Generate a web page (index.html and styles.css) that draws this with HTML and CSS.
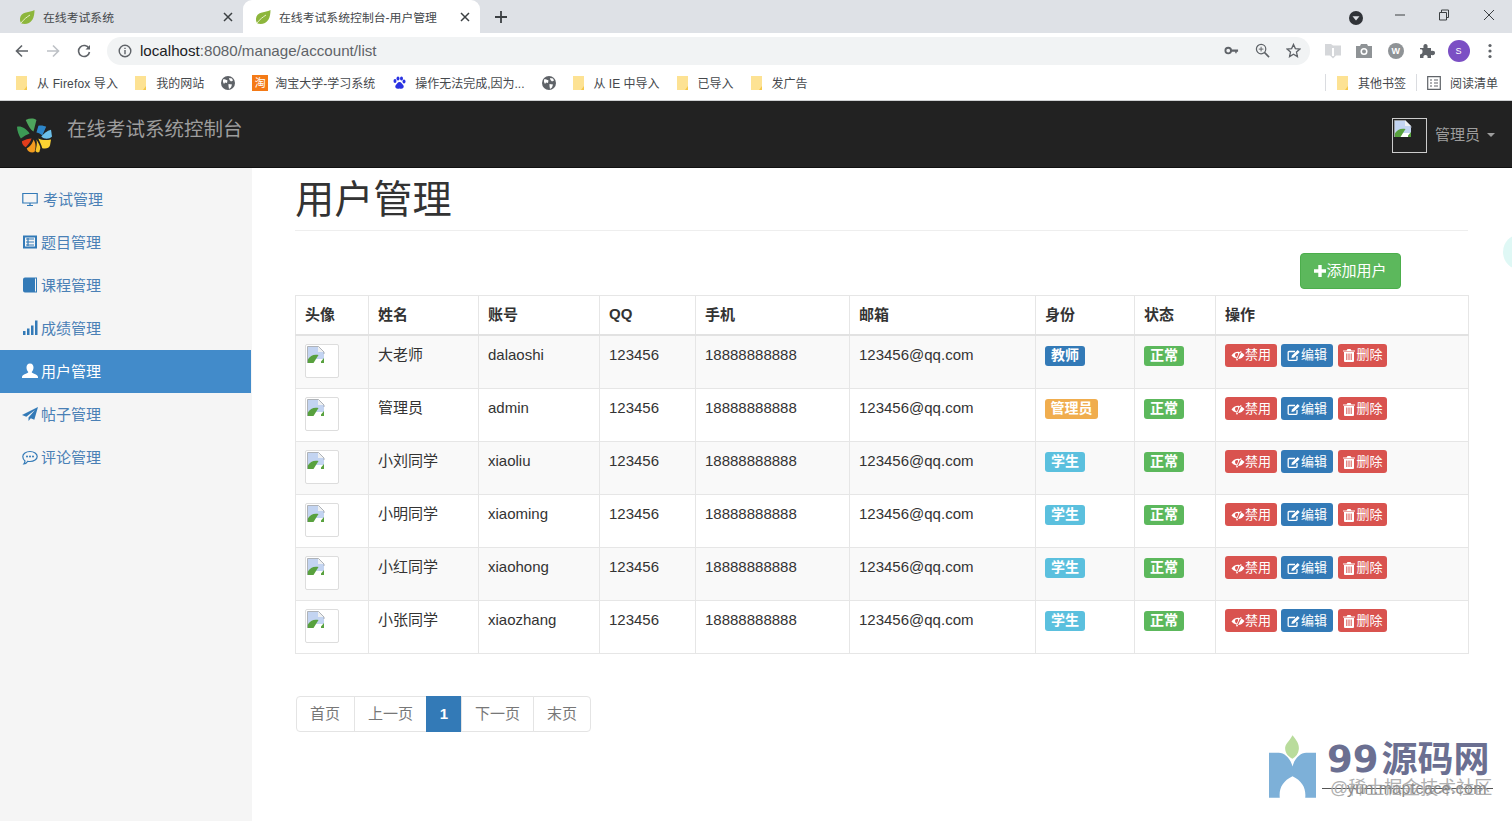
FILE: index.html
```html
<!DOCTYPE html>
<html lang="zh-CN">
<head>
<meta charset="utf-8">
<title>在线考试系统控制台-用户管理</title>
<link rel="stylesheet" href="styles.css">
</head>
<body>
<svg class="defs" width="0" height="0" aria-hidden="true">
  <symbol id="leaf" viewBox="0 0 16 16"><path d="M15.500 1C12 3.500 4 2 1.500 7.500.5 10 1 13 2.500 14.500 6 15.500 11 15 13.500 10.500 15 8 15.500 4 15.500 1z" fill="#8db63c"/><path d="M2 14C5 10 8 8 11 6" stroke="#e8f0c8" fill="none"/></symbol>
  <symbol id="close" viewBox="0 0 10 10"><path d="M1 1l8 8M9 1L1 9" stroke="#3c4043" stroke-width="1.500"/></symbol>
  <symbol id="folder" viewBox="0 0 12 14"><path d="M0 0h11v14H0z" fill="#fde293"/><path d="M11 10v4H8z" fill="#f5c84a"/></symbol>
  <symbol id="globe" viewBox="0 0 14 14"><circle cx="7" cy="7" r="7" fill="#5f6368"/><path d="M2 3.500C4 3 5 4 6.500 4.500L6 7 4 6.500 3 8 2 6zM8 2l3 .5 1 2-2 1L8.500 4zM7.500 8l3.500.5-1 3-2 1.500-.5-3z" fill="#fff"/></symbol>
  <symbol id="broken" viewBox="0 0 18 18"><path d="M.5.500h11l5.500 5.500v11H.5z" fill="#fff"/><path d="M1 1h10v5h6v7H1z" fill="#c3d4f1"/><path d="M.5 17V14C3 9.500 7 8 11.500 9L6.500 17zM14 15.500l3-3.500v5h-3z" fill="#58a13e"/><path d="M11 .500l6 5.500h-6z" fill="#eef0f2"/><path d="M.5 17V.500h11l5.500 5.500v2" fill="none" stroke="#9aa0a6" stroke-width=".8"/></symbol>
  <symbol id="eye" viewBox="0 0 14 14"><path d="M.5 7.500C3 3.500 9 2 13.500 7 12 9.500 9 11.500 6 11L9.500 3l1.200.700-4.500 9L5 12l.7-1.500C3.500 10 1.700 9 .5 7.500zM4 7a2.500 2.500 0 0 0 1.800 2.400L7 6.800C7.500 5.500 6.800 5 6 5 4.800 5 4 5.800 4 7z" fill="#fff" fill-rule="evenodd"/></symbol>
  <symbol id="edit" viewBox="0 0 14 14"><path d="M10 8v3.500a.8.800 0 0 1-.8.800H2a.8.800 0 0 1-.8-.8V4.300a.8.800 0 0 1 .8-.8h6" fill="none" stroke="#fff" stroke-width="1.300"/><path d="M5 7.500L10.700 2l2 2L7 9.500l-2.600.600z" fill="#fff"/></symbol>
  <symbol id="trash" viewBox="0 0 14 14"><path d="M2 4h10v9a1 1 0 0 1-1 1H3a1 1 0 0 1-1-1zM1 2.500h3.500L5.500 1h3l1 1.500H13v1H1z" fill="#fff"/><path d="M4.800 5.500v6.500M7 5.500v6.500M9.200 5.500v6.500" stroke="#d9534f"/></symbol>
</svg>

<div class="tabstrip">
  <div class="tab">
    <svg class="fav"><use href="#leaf"/></svg>
    <span class="tab-title">在线考试系统</span>
    <svg class="tab-close"><use href="#close"/></svg>
  </div>
  <div class="tab tab-active">
    <svg class="fav"><use href="#leaf"/></svg>
    <span class="tab-title">在线考试系统控制台-用户管理</span>
    <svg class="tab-close"><use href="#close"/></svg>
  </div>
  <svg class="newtab" viewBox="0 0 12 12"><path d="M6 0v12M0 6h12" stroke="#3c4043" stroke-width="1.800"/></svg>
  <div class="winctl">
    <svg class="win-profile" viewBox="0 0 14 14"><circle cx="7" cy="7" r="7" fill="#303338"/><path d="M3.500 5.200h7L7 9.500z" fill="#dee1e6"/></svg>
    <svg class="win-btn win-min" viewBox="0 0 12 12"><path d="M1 6h10" stroke="#3c4043" stroke-width="1"/></svg>
    <svg class="win-btn" viewBox="0 0 12 12"><path d="M1.500 3.500h7v7.500h-7zM3.500 3.500V1h7v7.500h-2" fill="none" stroke="#3c4043"/></svg>
    <svg class="win-btn" viewBox="0 0 12 12"><path d="M1 1l10 10M11 1L1 11" stroke="#3c4043"/></svg>
  </div>
</div>

<div class="toolbar">
  <svg class="nav-ic" viewBox="0 0 14 14"><path d="M13 7H2M7 1.500L1.500 7 7 12.500" fill="none" stroke="#5f6368" stroke-width="1.600"/></svg>
  <svg class="nav-ic" viewBox="0 0 14 14"><path d="M1 7h11M7 1.500L12.500 7 7 12.500" fill="none" stroke="#bdc1c6" stroke-width="1.600"/></svg>
  <svg class="nav-ic" viewBox="0 0 14 14"><path d="M12 4.500A5.500 5.500 0 1 0 12.500 8" fill="none" stroke="#5f6368" stroke-width="1.600"/><path d="M13 1v4.500H8.500z" fill="#5f6368"/></svg>
  <div class="omnibox">
    <svg class="info" viewBox="0 0 14 14"><circle cx="7" cy="7" r="5.800" fill="none" stroke="#5f6368" stroke-width="1.400"/><path d="M7 6v4.200M7 3.700v1.300" stroke="#5f6368" stroke-width="1.400"/></svg>
    <span class="url"><span class="url-host">localhost</span>:8080/manage/account/list</span>
    <div class="omni-icons">
      <svg class="omni-ic" viewBox="0 0 16 16"><circle cx="4.500" cy="8" r="3" fill="none" stroke="#5f6368" stroke-width="2"/><path d="M7 7h8v2.200h-1.500V11h-1.500V9.200H7z" fill="#5f6368"/></svg>
      <svg class="omni-ic" viewBox="0 0 16 16"><circle cx="6.500" cy="6.500" r="5" fill="none" stroke="#5f6368" stroke-width="1.300"/><path d="M10 10l5 5" stroke="#5f6368" stroke-width="1.700"/><path d="M6.500 4v5M4 6.500h5" stroke="#5f6368"/></svg>
      <svg class="omni-ic" viewBox="0 0 16 16"><path d="M8 1.500l2 4.500 4.800.5-3.600 3.200 1 4.800L8 12l-4.200 2.500 1-4.800L1.200 6.500 6 6z" fill="none" stroke="#5f6368" stroke-width="1.400"/></svg>
    </div>
  </div>
  <div class="ext-icons">
    <svg class="ext-ic" viewBox="0 0 16 16"><path d="M0 1h6l2 1.500h8v10h-5l-3 3-3-3H0z" fill="#d5d7da"/><path d="M8 5v8" stroke="#fff" stroke-width="2"/></svg>
    <svg class="ext-ic" viewBox="0 0 16 16"><path d="M0 3h4l1-2h6l1 2h4v12H0z" fill="#8f9396"/><circle cx="8" cy="8.500" r="3.500" fill="#fff"/><circle cx="8" cy="8.500" r="2" fill="#8f9396"/></svg>
    <div class="ext-w">W</div>
    <svg class="ext-ic" viewBox="0 0 16 16"><path d="M1 5h3.500C4 2 5 1 6.500 1S9 2 8.500 5H12v3c3-.5 4 .5 4 2s-1 2.500-4 2v3H8.500c.5-2-.5-3-2-3s-2.500 1-2 3H1v-3.500C3 11 3.500 10 3.500 8.500S3 6 1 6.500z" fill="#5f6368"/></svg>
    <div class="avatar">S</div>
    <svg class="ext-ic" viewBox="0 0 16 16"><circle cx="8" cy="2.500" r="1.600" fill="#5f6368"/><circle cx="8" cy="8" r="1.600" fill="#5f6368"/><circle cx="8" cy="13.500" r="1.600" fill="#5f6368"/></svg>
  </div>
</div>

<div class="bookmarks">
  <div class="bm bm-wide"><svg class="bm-ic"><use href="#folder"/></svg><span>从 Firefox 导入</span></div>
  <div class="bm"><svg class="bm-ic"><use href="#folder"/></svg><span>我的网站</span></div>
  <div class="bm"><svg class="bm-ic bm-globe"><use href="#globe"/></svg></div>
  <div class="bm bm-tb"><span class="bm-taobao">淘</span><span>淘宝大学-学习系统</span></div>
  <div class="bm"><svg class="bm-ic bm-globe" viewBox="0 0 14 14"><g fill="#2932e1"><ellipse cx="3" cy="5" rx="1.500" ry="2"/><ellipse cx="6" cy="2.500" rx="1.500" ry="2"/><ellipse cx="9.500" cy="2.500" rx="1.500" ry="2"/><ellipse cx="12" cy="5.500" rx="1.500" ry="2"/><path d="M7.500 6c2 0 2.500 2 4 3.500 1 2-1 4-4 3-3 1-5-1-4-3C5 8 5.500 6 7.500 6z"/></g></svg><span>操作无法完成,因为...</span></div>
  <div class="bm"><svg class="bm-ic bm-globe"><use href="#globe"/></svg></div>
  <div class="bm"><svg class="bm-ic"><use href="#folder"/></svg><span>从 IE 中导入</span></div>
  <div class="bm"><svg class="bm-ic"><use href="#folder"/></svg><span>已导入</span></div>
  <div class="bm"><svg class="bm-ic"><use href="#folder"/></svg><span>发广告</span></div>
  <div class="bm bm-right"><svg class="bm-ic"><use href="#folder"/></svg><span>其他书签</span></div>
  <div class="bm bm-reading"><svg class="bm-ic bm-globe" viewBox="0 0 14 14"><path d="M.7.700h12.600v12.600H.7zM3 4h2M3 7h2M3 10h2M7 4h4M7 7h4M7 10h4" fill="none" stroke="#5f6368" stroke-width="1.200"/></svg><span>阅读清单</span></div>
</div>

<header class="navbar">
  <svg class="logo" viewBox="0 0 36 36">
    <path d="M9 2c4-2 8-2 11 0-1 4-2 8-3 12-3-2-6-7-8-12z" fill="#4ea45c"/>
    <path d="M0 9c4-1 9 1 13 7-3 1-6 3-9 5-2-3-4-8-4-12z" fill="#3c9a55"/>
    <path d="M22 8c3-1 6 0 8 1l-4 9c-2-2-5-3-6-3z" fill="#2d86c9"/>
    <path d="M25 19c2-3 6-6 10-7l1 7c-3 3-8 3-11 0z" fill="#6cc0ea"/>
    <path d="M5 24c3-2 7-3 10-3-1 3-3 6-6 9-2-1-4-3-4-6z" fill="#e23d1c"/>
    <path d="M10 31c3-1 6-5 7-9 2 3 3 7 1 13-3 1-7 0-8-4z" fill="#f49b1f"/>
    <path d="M20 22c2 4 4 6 4 9l-1 4c-2 1-3 0-4-1 1-4 2-8 1-12z" fill="#f8c52a"/>
    <path d="M22 21c4 2 8 2 13 1l-1 6c-1 3-4 4-8 3-1-4-3-7-4-10z" fill="#fbd332"/>
  </svg>
  <span class="brand">在线考试系统控制台</span>
  <div class="nav-user">
    <div class="nav-avatar"><svg class="nav-broken"><use href="#broken"/></svg></div>
    <span class="nav-name">管理员</span>
    <span class="caret"></span>
  </div>
</header>

<div class="layout">
  <nav class="sidebar">
    <a class="side-item side-first"><svg class="side-ic" viewBox="0 0 16 16"><path d="M.8 2.500h14.400v9.500H.8zM5 14.500h6M8 12v2.500" fill="none" stroke="currentColor" stroke-width="1.200"/></svg>考试管理</a>
    <a class="side-item"><svg class="side-ic" viewBox="0 0 16 16"><path d="M1 1.500h14v13H1z" fill="currentColor"/><path d="M3 3.500h10v9H3z" fill="#f5f5f5"/><path d="M4 5h8M4 8h8M4 11h8M6 4v8" stroke="currentColor" stroke-width="1.200"/></svg>题目管理</a>
    <a class="side-item"><svg class="side-ic" viewBox="0 0 16 16"><path d="M3 .500h12v15H3a2 2 0 0 1-2-2v-11a2 2 0 0 1 2-2z" fill="currentColor"/><path d="M13.500 1.500v13" stroke="#f5f5f5"/></svg>课程管理</a>
    <a class="side-item"><svg class="side-ic" viewBox="0 0 16 16"><path d="M1 11h2.500v4H1zM5 8.500h2.500V15H5zM9 5.500h2.500V15H9zM13 .500h2.500V15H13z" fill="currentColor"/></svg>成绩管理</a>
    <a class="side-item side-active"><svg class="side-ic" viewBox="0 0 16 16"><path d="M8 .5c2.500 0 3.500 2 3.500 4 0 2-1 3.500-1.800 4.500-.2 1.500 6.300 2 6.300 5v1H0v-1c0-3 6.500-3.500 6.300-5C5.500 8 4.500 6.500 4.500 4.500c0-2 1-4 3.500-4z" fill="currentColor"/></svg>用户管理</a>
    <a class="side-item"><svg class="side-ic" viewBox="0 0 16 16"><path d="M16 1L0 9l4.300 1.800L13 4 6.500 11.500v3.500l2.300-2.800 3.500 1.500z" fill="currentColor"/></svg>帖子管理</a>
    <a class="side-item"><svg class="side-ic" viewBox="0 0 16 16"><path d="M8 2.500c4 0 7.200 2.300 7.200 5s-3.200 5-7.200 5c-.8 0-1.500 0-2.200-.2C4.800 14 3 15 1.800 15c.8-1 1.200-2 1.200-3C1.700 11 .8 9.300.8 7.500c0-2.700 3.200-5 7.200-5z" fill="none" stroke="currentColor" stroke-width="1.200"/><circle cx="5" cy="7.500" r="1" fill="currentColor"/><circle cx="8" cy="7.500" r="1" fill="currentColor"/><circle cx="11" cy="7.500" r="1" fill="currentColor"/></svg>评论管理</a>
  </nav>

  <main class="content">
    <h1 class="page-title">用户管理</h1>
    <div class="actions">
      <button class="btn-add"><svg class="plus" viewBox="0 0 12 12"><path d="M4.300 0h3.400v4.300H12v3.400H7.700V12H4.300V7.700H0V4.300h4.300z" fill="#fff"/></svg>添加用户</button>
    </div>
    <table class="users">
      <colgroup>
        <col class="c-img"><col class="c-name"><col class="c-acc"><col class="c-qq"><col class="c-tel"><col class="c-mail"><col class="c-role"><col class="c-state"><col class="c-ops">
      </colgroup>
      <thead>
        <tr><th>头像</th><th>姓名</th><th>账号</th><th>QQ</th><th>手机</th><th>邮箱</th><th>身份</th><th>状态</th><th>操作</th></tr>
      </thead>
      <tbody>
        <tr>
          <td><div class="thumb"><svg class="thumb-ic"><use href="#broken"/></svg></div></td>
          <td>大老师</td><td>dalaoshi</td><td>123456</td><td>18888888888</td><td>123456@qq.com</td>
          <td><span class="label l-blue">教师</span></td><td><span class="label l-green">正常</span></td>
          <td class="ops"><a class="op op-red"><svg class="op-ic"><use href="#eye"/></svg>禁用</a><a class="op op-blue"><svg class="op-ic"><use href="#edit"/></svg>编辑</a><a class="op op-red op-del"><svg class="op-ic"><use href="#trash"/></svg>删除</a></td>
        </tr>
        <tr>
          <td><div class="thumb"><svg class="thumb-ic"><use href="#broken"/></svg></div></td>
          <td>管理员</td><td>admin</td><td>123456</td><td>18888888888</td><td>123456@qq.com</td>
          <td><span class="label l-orange">管理员</span></td><td><span class="label l-green">正常</span></td>
          <td class="ops"><a class="op op-red"><svg class="op-ic"><use href="#eye"/></svg>禁用</a><a class="op op-blue"><svg class="op-ic"><use href="#edit"/></svg>编辑</a><a class="op op-red op-del"><svg class="op-ic"><use href="#trash"/></svg>删除</a></td>
        </tr>
        <tr>
          <td><div class="thumb"><svg class="thumb-ic"><use href="#broken"/></svg></div></td>
          <td>小刘同学</td><td>xiaoliu</td><td>123456</td><td>18888888888</td><td>123456@qq.com</td>
          <td><span class="label l-cyan">学生</span></td><td><span class="label l-green">正常</span></td>
          <td class="ops"><a class="op op-red"><svg class="op-ic"><use href="#eye"/></svg>禁用</a><a class="op op-blue"><svg class="op-ic"><use href="#edit"/></svg>编辑</a><a class="op op-red op-del"><svg class="op-ic"><use href="#trash"/></svg>删除</a></td>
        </tr>
        <tr>
          <td><div class="thumb"><svg class="thumb-ic"><use href="#broken"/></svg></div></td>
          <td>小明同学</td><td>xiaoming</td><td>123456</td><td>18888888888</td><td>123456@qq.com</td>
          <td><span class="label l-cyan">学生</span></td><td><span class="label l-green">正常</span></td>
          <td class="ops"><a class="op op-red"><svg class="op-ic"><use href="#eye"/></svg>禁用</a><a class="op op-blue"><svg class="op-ic"><use href="#edit"/></svg>编辑</a><a class="op op-red op-del"><svg class="op-ic"><use href="#trash"/></svg>删除</a></td>
        </tr>
        <tr>
          <td><div class="thumb"><svg class="thumb-ic"><use href="#broken"/></svg></div></td>
          <td>小红同学</td><td>xiaohong</td><td>123456</td><td>18888888888</td><td>123456@qq.com</td>
          <td><span class="label l-cyan">学生</span></td><td><span class="label l-green">正常</span></td>
          <td class="ops"><a class="op op-red"><svg class="op-ic"><use href="#eye"/></svg>禁用</a><a class="op op-blue"><svg class="op-ic"><use href="#edit"/></svg>编辑</a><a class="op op-red op-del"><svg class="op-ic"><use href="#trash"/></svg>删除</a></td>
        </tr>
        <tr>
          <td><div class="thumb"><svg class="thumb-ic"><use href="#broken"/></svg></div></td>
          <td>小张同学</td><td>xiaozhang</td><td>123456</td><td>18888888888</td><td>123456@qq.com</td>
          <td><span class="label l-cyan">学生</span></td><td><span class="label l-green">正常</span></td>
          <td class="ops"><a class="op op-red"><svg class="op-ic"><use href="#eye"/></svg>禁用</a><a class="op op-blue"><svg class="op-ic"><use href="#edit"/></svg>编辑</a><a class="op op-red op-del"><svg class="op-ic"><use href="#trash"/></svg>删除</a></td>
        </tr>
      </tbody>
    </table>
    <div class="pager">
      <a class="pg pg-first">首页</a><a class="pg">上一页</a><a class="pg pg-on">1</a><a class="pg">下一页</a><a class="pg pg-last">末页</a>
    </div>
  </main>
</div>

<div class="side-blob"></div>

<div class="watermark">
  <svg class="wm-logo" viewBox="0 0 48 64">
    <path d="M24 0c4 5 7 9 6.500 14-.5 5-3 8-6.500 10-4-2-7-5-7.500-10C16 9 21 6 24 0z" fill="#b9dc9c"/>
    <path d="M0 18H10C16 18 22 24 24 32 26 24 32 18 38 18H48V64H37C38 54 34 47 24 42 14 47 10 54 11 64H0z" fill="#7db0d8"/>
  </svg>
  <div class="wm-text">
    <div class="wm-big"><span class="wm-digits">99</span>源码网</div>
    <div class="wm-small">
      <span class="wm-line"></span>
      <span class="wm-a">@稀土掘金技术社区</span>
      <span class="wm-b">yun.maptcace.com</span>
    </div>
  </div>
</div>
</body>
</html>
```

FILE: styles.css
```css
* { box-sizing: border-box; }
html, body { margin: 0; padding: 0; height: 821px; overflow: hidden; }
body {
  font-family: "Liberation Sans", "Noto Sans CJK SC", sans-serif;
  font-size: 15px;
  color: #333;
  background: #fff;
  position: relative;
}
.defs { position: absolute; }

/* browser chrome */
.tabstrip { height: 33px; background: #dee1e6; display: flex; align-items: center; padding-left: 8px; }
.tab { width: 235px; height: 33px; display: flex; align-items: center; padding: 0 10px 0 12px; font-size: 11.850px; color: #45484c; }
.tab:first-child { padding-left: 11px; }
.tab-active { width: 237px; background: #fff; border-radius: 9px 9px 0 0; }
.fav { width: 16px; height: 16px; flex: none; margin-right: 8px; }
.tab-title { flex: 1; white-space: nowrap; }
.tab-close { width: 10px; height: 10px; flex: none; }
.newtab { width: 12px; height: 12px; margin-left: 15px; }
.winctl { margin-left: auto; display: flex; align-items: center; padding-right: 17px; gap: 33px; }
.win-profile { width: 14px; height: 14px; margin-top: 2px; margin-right: -2px; }
.win-btn { width: 12px; height: 12px; margin-top: -3px; }
.win-min { margin-right: -1px; }

.toolbar { height: 34px; background: #fff; display: flex; align-items: center; padding: 1px 0 0 15px; }
.nav-ic { width: 14px; height: 14px; margin-right: 17px; flex: none; }
.omnibox { width: 1203px; height: 28px; background: #f1f3f4; border-radius: 14px; margin-left: -1px; display: flex; align-items: center; padding-left: 11px; }
.info { width: 14px; height: 14px; flex: none; margin-right: 8px; }
.url { font-size: 15.150px; color: #5f6368; }
.url-host { color: #202124; }
.omni-icons { margin-left: auto; display: flex; align-items: center; gap: 16px; padding-right: 9px; }
.omni-ic { width: 15px; height: 15px; }
.ext-icons { display: flex; align-items: center; margin-left: 15px; gap: 15.400px; }
.ext-ic { width: 16px; height: 16px; flex: none; }
.ext-w { width: 16px; height: 16px; border-radius: 50%; background: #8f9396; color: #fff; font-size: 9px; font-weight: bold; text-align: center; line-height: 16px; }
.avatar { width: 22px; height: 22px; border-radius: 50%; background: #7b4fc4; color: #fff; font-size: 9px; text-align: center; line-height: 22px; margin: 0 -3px; }

.bookmarks { height: 34px; background: #fff; display: flex; align-items: center; padding: 0 0 2px 16px; font-size: 12px; color: #45484c; border-bottom: 1px solid #cfd1d3; }
.bm { display: flex; align-items: center; gap: 9px; margin-right: 17px; white-space: nowrap; }
.bm-wide span { letter-spacing: .15px; }
.bm-tb { gap: 7px; }
.bm-ic { width: 12px; height: 14px; flex: none; }
.bm-globe { width: 14px; height: 14px; }
.bm-taobao { width: 16px; height: 16px; background: #f47a16; color: #fff; font-size: 11px; text-align: center; line-height: 16px; }
.bm-right { margin-left: auto; margin-right: 0; padding-left: 11px; border-left: 1px solid #dadce0; height: 17px; }
.bm-reading { margin-right: 14px; margin-left: 10px; padding-left: 10px; border-left: 1px solid #dadce0; height: 17px; }

/* app navbar */
.navbar { height: 67px; background: #222; border-bottom: 1px solid #111; display: flex; align-items: center; padding: 0 17px; }
.logo { width: 35px; height: 35px; margin-top: 2px; flex: none; }
.brand { margin-left: 15px; margin-top: -14px; font-size: 19.500px; color: #9d9d9d; white-space: nowrap; }
.nav-user { margin-left: auto; margin-top: 3px; display: flex; align-items: center; color: #9d9d9d; }
.nav-avatar { width: 35px; height: 35px; border: 1px solid #ccc; padding: 1px; }
.nav-broken { width: 18px; height: 18px; display: block; }
.nav-name { margin-left: 8px; margin-top: -5px; font-size: 15px; }
.caret { margin-left: 7px; margin-top: -2px; border-top: 4px solid #9d9d9d; border-left: 4px solid transparent; border-right: 4px solid transparent; }

/* page */
.layout { display: flex; height: 653px; }
.sidebar { width: 252px; flex: none; background: #f5f5f5; padding-top: 10px; padding-right: 1px; }
.side-item { height: 43px; display: flex; align-items: center; padding: 0 0 2px 22px; color: #4a80b5; font-size: 15px; }
.side-ic { width: 16px; height: 16px; margin-right: 3px; flex: none; color: #337ab7; }
.side-first .side-ic { margin-right: 5px; }
.side-active { background: #428bca; color: #fff; }
.side-active .side-ic { color: #fff; }

.content { flex: 1; padding: 0 44px 0 43px; min-width: 0; }
.page-title { margin: 0 0 22px; height: 63px; font-size: 39.200px; font-weight: 400; line-height: 64px; color: #333; border-bottom: 1px solid #eee; }
.actions { display: flex; justify-content: flex-end; padding-right: 67px; margin-bottom: 6px; }
.btn-add { width: 101px; height: 36px; background: #5cb85c; border: 1px solid #4cae4c; border-radius: 4px; color: #fff; font: inherit; font-size: 15px; padding: 0 0 4px; display: flex; align-items: center; justify-content: center; }
.plus { width: 12px; height: 12px; margin-top: 3px; }

.users { width: 1173px; table-layout: fixed; border-collapse: collapse; border: 1px solid #e6e6e6; font-size: 15px; }
.c-img { width: 73px; } .c-name { width: 110px; } .c-acc { width: 121px; } .c-qq { width: 96px; }
.c-tel { width: 154px; } .c-mail { width: 186px; } .c-role { width: 99px; } .c-state { width: 81px; } .c-ops { width: 253px; }
.users th { height: 39px; padding: 0 9px 2px; text-align: left; font-weight: bold; border: 1px solid #e6e6e6; border-bottom: 2px solid #e2e2e2; }
.users td { height: 53px; padding: 9px; vertical-align: top; border: 1px solid #e6e6e6; white-space: nowrap; line-height: 20px; }
.users tbody tr:first-child td { height: 54px; }
.users tbody tr:nth-child(odd) { background: #f9f9f9; }
.thumb { width: 34px; height: 34px; margin-top: -1px; background: #fff; border: 1px solid #ddd; padding: 1px; border-radius: 2px; }
.thumb-ic { width: 18px; height: 18px; display: block; }

.label { display: inline-block; height: 20px; margin-top: 1px; padding: 0 6px; border-radius: 3px; color: #fff; font-size: 14px; font-weight: bold; line-height: 19px; vertical-align: top; }
.l-blue { background: #337ab7; } .l-green { background: #5cb85c; } .l-orange { background: #f0ad4e; padding: 0 5.500px; } .l-cyan { background: #5bc0de; }

.users td.ops { font-size: 0; line-height: 0; }
.op { display: inline-flex; align-items: center; justify-content: center; width: 52px; height: 23px; border-radius: 3px; color: #fff; font-size: 13px; line-height: 20px; margin-right: 4px; margin-top: -1px; vertical-align: top; }
.op-del { width: 49px; margin-left: 1px; }
.op-red { background: #d9534f; } .op-blue { background: #337ab7; }
.op-ic { width: 14px; height: 14px; flex: none; }

.pager { display: flex; width: max-content; margin: 42px 0 0 1px; height: 36px; }
.pg { padding: 0 13px; line-height: 33px; border: 1px solid #e4e4e4; margin-left: -1px; color: #777; font-size: 15px; background: #fff; }
.pg-first { margin-left: 0; padding-right: 14px; border-radius: 4px 0 0 4px; }
.pg-last { border-radius: 0 4px 4px 0; }
.pg-on { width: 36px; padding: 0; text-align: center; background: #337ab7; border-color: #337ab7; color: #fff; font-weight: bold; }

/* overlays */
.side-blob { position: absolute; left: 1503px; top: 234px; width: 36px; height: 36px; border-radius: 50%; background: #dff8f5; }
.watermark { position: absolute; left: 1269px; top: 735px; display: flex; }
.wm-logo { width: 47px; height: 63px; flex: none; }
.wm-text { margin-left: 11px; width: 175px; position: relative; }
.wm-big { font-size: 36px; line-height: 44px; margin-top: 3px; font-weight: bold; color: #6b6f91; white-space: nowrap; }
.wm-digits { font-family: "DejaVu Sans", sans-serif; font-size: 37px; margin-right: 3px; }
.wm-small { position: relative; height: 18px; margin-top: -2px; margin-left: -5px; white-space: nowrap; }
.wm-line { position: absolute; left: 0; top: 8px; width: 171px; height: 1px; background: #555; }
.wm-a { position: absolute; left: 8px; top: -3px; color: #b0b0b0; font-size: 18px; line-height: 22px; }
.wm-b { position: absolute; left: 25px; top: -1px; color: #8a8a8a; font-size: 16px; line-height: 20px; letter-spacing: .35px; }
```
